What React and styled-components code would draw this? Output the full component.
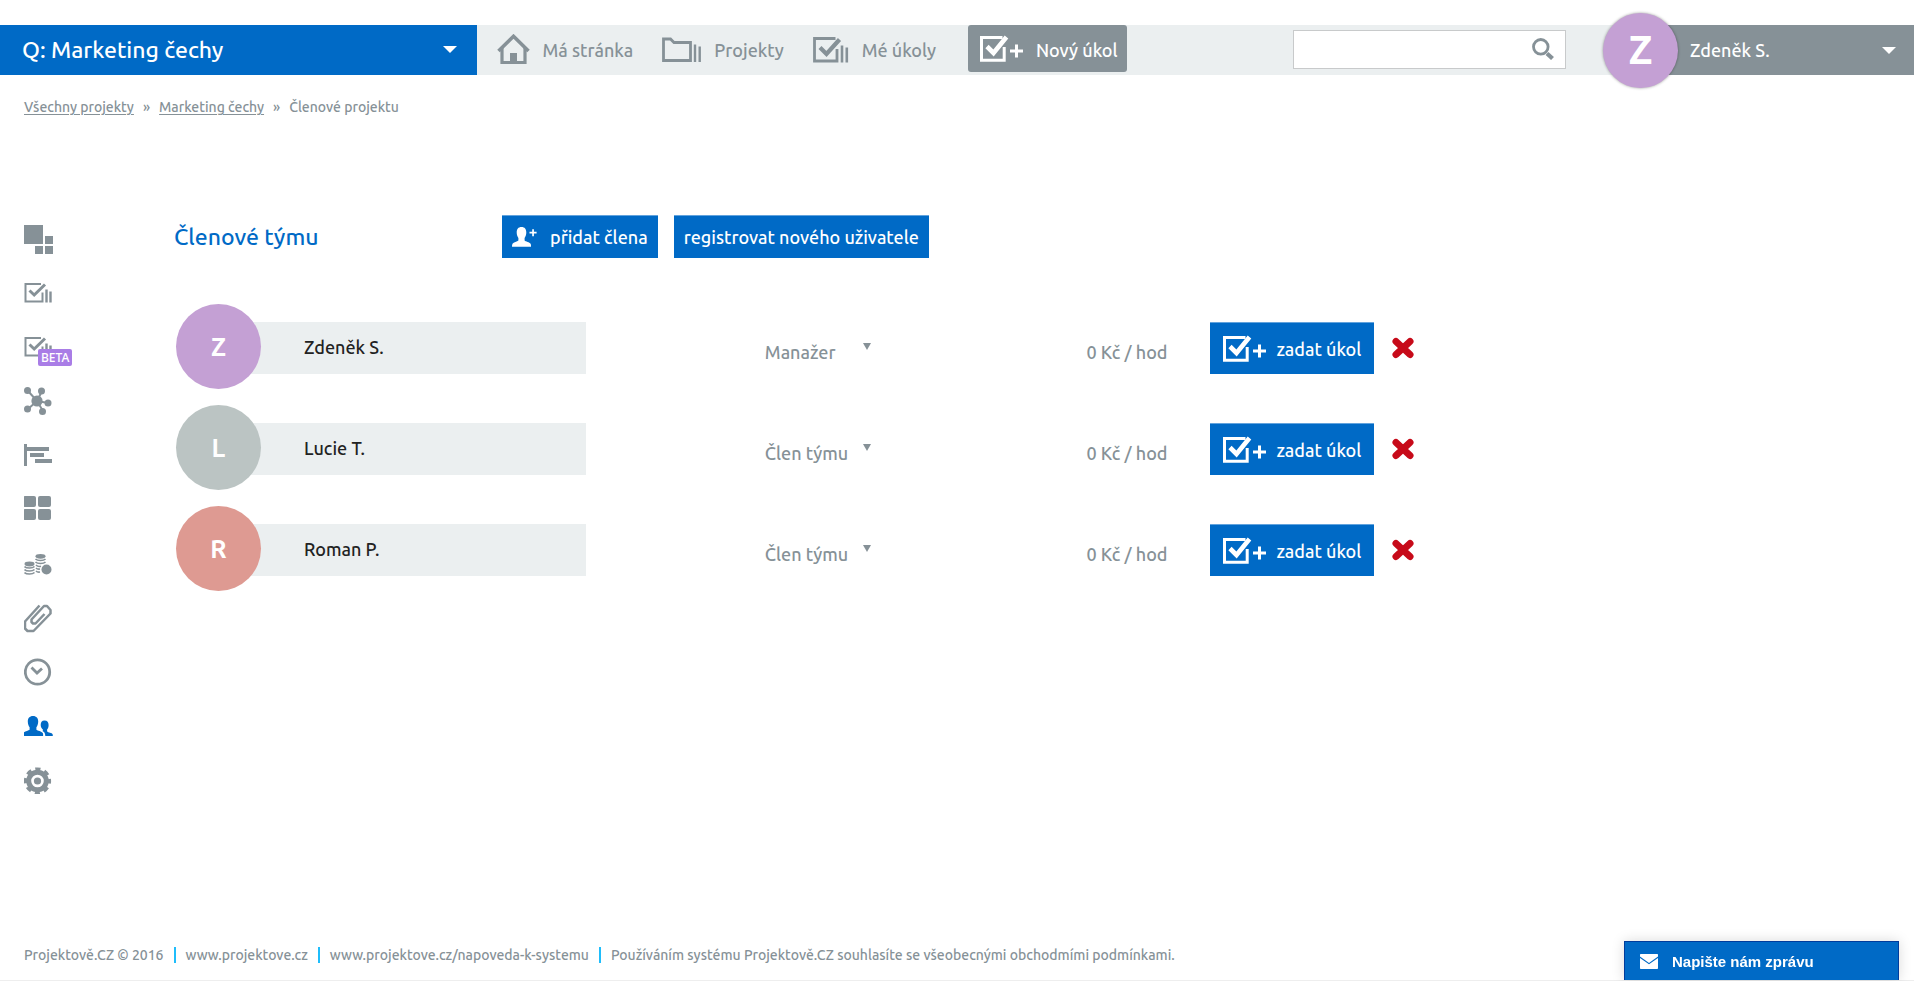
import React, { useState } from 'react'
import styled, { createGlobalStyle, ThemeProvider } from 'styled-components'

const theme = {
    blue: '#006ac6',
    grey: '#869197',
    light: '#ebeff0',
    text: '#222222',
    red: '#c70a19',
    beta: '#a97de6',
    line: '#eeeeee',
    cyan: '#1fbdfb',
}

const GlobalStyle = createGlobalStyle`
*, *::before, *::after {
  box-sizing: border-box;
}
body {
  margin: 0;
  background: #fff;
  font-family: Ubuntu, "Noto Sans", sans-serif;
  font-size: 18px;
  font-weight: 500;
}
button, input, select {
  font: inherit;
  color: inherit;
}
svg {
  display: block;
  flex: none;
}
`

const Page = styled.div`
display: flex;
flex-direction: column;
min-height: 100vh;
padding-top: 25px;
color: ${props => props.theme.grey};
border-bottom: 1px solid ${props => props.theme.line};
`

// Top bar
const TopBar = styled.header`
display: flex;
align-items: stretch;
height: 50px;
background: ${props => props.theme.light};
`

const ProjectButton = styled.button`
display: flex;
align-items: center;
justify-content: space-between;
width: calc(25% - 2px);
padding: 0 20px 2px 22px;
border: 0;
background: ${props => props.theme.blue};
color: #fff;
font-size: 23px;
cursor: pointer;
`

const MainNav = styled.nav`
display: flex;
align-items: center;
gap: 29px;
padding-left: 20px;
`

const NavLink = styled.a`
display: flex;
align-items: center;
gap: 13px;
color: inherit;
text-decoration: none;
white-space: nowrap;
`

const NewTask = styled.button`
display: flex;
align-items: center;
gap: 13px;
align-self: flex-start;
height: 47px;
padding: 2px 9px 0 12px;
margin-left: 3px;
border: 0;
border-radius: 3px;
background: ${props => props.theme.grey};
color: #fff;
white-space: nowrap;
cursor: pointer;
`

const Search = styled.form`
display: flex;
align-items: center;
align-self: center;
width: 273px;
height: 39px;
margin: 0 74px 2px auto;
border: 1px solid #c8cacb;
background: #fff;
`

const SearchInput = styled.input`
flex: 1;
min-width: 0;
height: 100%;
padding: 0 10px;
border: 0;
outline: 0;
background: transparent;
`

const SearchButton = styled.button`
padding: 0 11px;
border: 0;
background: transparent;
cursor: pointer;
`

const UserButton = styled.button`
display: flex;
align-items: center;
gap: 12px;
width: 274px;
padding: 0 18px 0 0;
border: 0;
background: ${props => props.theme.grey};
color: #fff;
cursor: pointer;
`

const UserName = styled.span`
flex: 1;
text-align: left;
`

const Avatar = styled.span`
display: flex;
align-items: center;
justify-content: center;
flex: none;
width: ${props => props.$size}px;
height: ${props => props.$size}px;
border-radius: 50%;
background: ${props => props.$color};
color: #fff;
font-size: 25px;
font-weight: 700;
`

const UserAvatar = styled(Avatar)`
margin-left: -37px;
padding-bottom: 2px;
font-size: 40px;
box-shadow: 0 0 3px rgba(0,0,0,0.4);
`

// Breadcrumbs
const Crumbs = styled.nav`
display: flex;
gap: 9px;
padding: 0 24px;
margin-top: 22px;
font-size: 14px;
line-height: 20px;

a {
  color: inherit;
  text-underline-offset: 2px;
}
`

const Body = styled.div`
display: flex;
flex: 1;
margin-top: 96px;
`

const SideNav = styled.nav`
display: flex;
flex-direction: column;
width: 174px;
padding-left: 24px;
`

const SideLink = styled.a`
position: relative;
display: flex;
align-items: center;
width: 32px;
height: 54px;
color: ${props => props.$active ? props.theme.blue : props.theme.grey};
`

const Beta = styled.span`
position: absolute;
top: 28px;
left: 14px;
padding: 0 3px;
border-radius: 2px;
background: ${props => props.theme.beta};
color: #fff;
font-family: "Noto Sans", sans-serif;
font-size: 12px;
font-weight: 500;
line-height: 17px;
`

const Content = styled.main`
flex: 1;
min-width: 0;
padding-right: 24px;
`

const Heading = styled.div`
display: flex;
align-items: center;
height: 46px;
`

const Title = styled.h1`
width: 328px;
margin: 0;
color: ${props => props.theme.blue};
font-size: 23px;
font-weight: 500;
`

const BlueButton = styled.button`
display: flex;
align-items: center;
gap: 13px;
height: 43px;
padding: 0 10px;
margin-right: 16px;
border: 0;
border-top: 1px solid #62a3dd;
background: ${props => props.theme.blue};
color: #fff;
white-space: nowrap;
cursor: pointer;
`

const TaskButton = styled(BlueButton)`
gap: 10px;
height: 52px;
padding: 2px 13px 0;
margin-right: 18px;
`

// Members
const Members = styled.table`
width: 100%;
margin-top: 37px;
border-collapse: collapse;
table-layout: fixed;

td {
  height: 101px;
  padding: 0;
  vertical-align: middle;
}
`

const Col = styled.col`
width: ${props => props.$width};
`

const Member = styled.div`
display: flex;
align-items: center;
padding-left: 2px;
`

const MemberName = styled.div`
flex: 1;
height: 52px;
margin-top: 2px;
margin-left: -44px;
padding-left: 87px;
background: ${props => props.theme.light};
color: ${props => props.theme.text};
line-height: 50px;
`

const MemberAvatar = styled(Avatar)`
z-index: 1;
`

const Role = styled.label`
display: flex;
align-items: center;
padding-left: 179px;
`

const RoleSelect = styled.select`
width: 98px;
margin-top: 10px;
padding: 0;
border: 0;
background: transparent;
appearance: none;
cursor: pointer;
`

const Rate = styled.span`
display: block;
margin-top: 10px;
padding-left: 3px;
white-space: nowrap;
`

const Actions = styled.div`
display: flex;
align-items: center;
margin-top: 2px;
padding-left: 4px;
`

const RemoveButton = styled.button`
padding: 0;
border: 0;
background: transparent;
color: ${props => props.theme.red};
cursor: pointer;
`

// Footer
const Footer = styled.footer`
display: flex;
padding: 0 24px;
margin-bottom: 15px;
font-size: 14px;
line-height: 20px;

a {
  color: inherit;
  text-decoration: none;
}
`

const Divider = styled.span`
width: 2px;
height: 16px;
margin: 2px 10px;
background: ${props => props.theme.cyan};
`

const Chat = styled.button`
position: fixed;
right: 15px;
bottom: 1px;
display: flex;
align-items: center;
gap: 14px;
width: 275px;
height: 39px;
padding: 0 15px;
border: 1px solid #003c9c;
border-bottom: 0;
background: ${props => props.theme.blue};
box-shadow: 0 0 12px rgba(0,0,0,0.15);
color: #fff;
font-family: "Liberation Sans", Arial, sans-serif;
font-size: 15px;
font-weight: 700;
cursor: pointer;
`

// Icons
const Caret = ({ width = 14, height = 7 }) => (
    <svg width={width} height={height} viewBox="0 0 14 7" preserveAspectRatio="none" fill="currentColor">
        <path d="M0 0h14L7 7z" />
    </svg>
)

const HomeIcon = () => (
    <svg width="33" height="32" viewBox="0 0 33 32" fill="none" stroke="currentColor">
        <path d="M1.500 17L16.500 2.300L31.500 17" strokeWidth="3.600" />
        <path d="M5 14V28.500H28V14" strokeWidth="3.200" />
        <path d="M13 19h7v9h-7z" fill="currentColor" stroke="none" />
    </svg>
)

const FolderIcon = () => (
    <svg width="39" height="26" viewBox="0 0 39 26" fill="none" stroke="currentColor" strokeWidth="2.800">
        <path d="M1.500 2H8.500L12 5.500H28.500V23.500H1.500z" />
        <path d="M33 7.500V25M37.700 9.500V25" strokeWidth="2.400" />
    </svg>
)

const TasksIcon = () => (
    <svg width="36" height="26" viewBox="0 0 36 26" fill="none" stroke="currentColor">
        <path d="M22.500 1.500H1.500V24H24V12" strokeWidth="2.800" />
        <path d="M7 10.500L13.500 17L26.500 2.500" strokeWidth="4.200" />
        <path d="M29 8.500V25.500M33.800 10.500V25.500" strokeWidth="2.600" />
    </svg>
)

const TaskPlusIcon = () => (
    <svg width="43" height="29" viewBox="0 0 43 29" fill="none" stroke="currentColor">
        <path d="M22.500 2.500H1.500V25.200H24.200V12" strokeWidth="3" />
        <path d="M7 11.500L13.500 18L26.500 2" strokeWidth="4.600" />
        <path d="M30 16H43M36.500 9.500V22.500" strokeWidth="3" />
    </svg>
)

const SearchIcon = () => (
    <svg width="22" height="22" viewBox="0 0 22 22" fill="none" stroke="currentColor">
        <circle cx="8.800" cy="8.800" r="7.300" strokeWidth="2.800" />
        <path d="M15 15.500L20.500 20.500" strokeWidth="4.200" />
    </svg>
)

const DashboardIcon = () => (
    <svg width="31" height="31" viewBox="0 0 31 31" fill="currentColor">
        <path d="M0 0h19v19H0zM21 11h8v8h-8zM11 21h8v8h-8zM21 21h8v8h-8z" />
    </svg>
)

const MindMapIcon = () => (
    <svg width="31" height="30" viewBox="0 0 31 30" fill="currentColor" stroke="currentColor" strokeWidth="2">
        <path d="M4 4L13 14L18 4M4 22L13 14L19 24M13 14L24 16" fill="none" />
        <g stroke="none">
            <circle cx="13" cy="14" r="5.600" />
            <circle cx="3.500" cy="3.500" r="3.500" />
            <circle cx="17.500" cy="4" r="3.500" />
            <circle cx="24" cy="16" r="3.500" />
            <circle cx="3.500" cy="22" r="3.500" />
            <circle cx="18.500" cy="24.500" r="3.500" />
        </g>
    </svg>
)

const GanttIcon = () => (
    <svg width="31" height="26" viewBox="0 0 31 26" fill="currentColor">
        <path d="M0 1h3v22H0zM3 4H25v4H3zM6 10h14v4H6zM11 16h17v4H11z" />
    </svg>
)

const BoardIcon = () => (
    <svg width="29" height="28" viewBox="0 0 29 28" fill="currentColor">
        <rect x="-1" y="0" width="13" height="11" rx="2" />
        <rect x="14" y="0" width="13" height="11" rx="2" />
        <rect x="-1" y="13" width="13" height="11" rx="2" />
        <rect x="14" y="13" width="13" height="11" rx="2" />
    </svg>
)

const CoinsIcon = () => (
    <svg width="31" height="22" viewBox="0 0 31 22" fill="none" stroke="currentColor" strokeWidth="1.600">
        <ellipse cx="5.500" cy="11" rx="5" ry="2.400" fill="currentColor" stroke="none" />
        <path d="M0.500 13.500c2 2 8 2 10 0M0.500 16.500c2 2 8 2 10 0M0.500 19.500c2 2 8 2 10 0" />
        <ellipse cx="16.500" cy="3.300" rx="5" ry="2.400" fill="currentColor" stroke="none" />
        <path d="M11.500 6c2 2 8 2 10 0M11.500 9c2 2 8 2 10 0M12 12c1.500 1.500 4 1.500 5 1.200M12 15c1 1 2.500 1.300 4 1M12 18c1 1 2.500 1.300 4 1" />
        <circle cx="22.500" cy="16.500" r="5" fill="currentColor" stroke="none" />
    </svg>
)

const ClipIcon = () => (
    <svg width="31" height="29" viewBox="1 0 31 29" fill="none" stroke="currentColor" strokeWidth="2.500" strokeLinejoin="round">
        <path d="M16.500 1.500L2 17.500V24.500L4.500 27H10.500L27.500 9.500V6L24 2H21L8.500 15.500V18L10 19.500H12.500L21.500 10" />
    </svg>
)

const ClockIcon = () => (
    <svg width="30" height="28" viewBox="1 0 30 28" fill="none" stroke="currentColor">
        <circle cx="14.500" cy="14" r="12.200" strokeWidth="2.800" />
        <path d="M8.500 9.500L14 15L19 10.500" strokeWidth="2.800" />
    </svg>
)

const UsersIcon = () => (
    <svg width="31" height="20" viewBox="1 0 31 20" fill="currentColor">
        <path d="M10 0c3.500 0 5.200 2.300 5.200 5.500 0 2.500-.8 4.500-1.800 5.800v2.400c1 1 5.400 1.500 6.400 3.300.4.900.3 1.700.3 3H0c0-1.300 0-2.100.4-3 1-1.800 5-2.300 6.200-3.300v-2.400C5.600 10 4.800 8 4.800 5.500 4.800 2.300 6.500 0 10 0z" />
        <path d="M21.500 4.500c2.900 0 4.100 2 4.100 4.500 0 2-.6 3.600-1.500 4.600v2c1 1 5 1.200 5.500 2.600.2.600.2 1 .2 1.800h-7.500c0-3.500-1.500-4.200-2.600-4.800l.2-1.600c-1.100-1-2.200-2.600-2.200-4.600 0-2.500 1-4.500 3.800-4.500z" />
    </svg>
)

const GearIcon = () => (
    <svg width="30" height="28" viewBox="1 -1 30 28" fill="none" stroke="currentColor">
        <circle cx="14.500" cy="14" r="8.800" strokeWidth="5" />
        <circle cx="14.500" cy="14" r="12" strokeWidth="3.200" strokeDasharray="5.200 4.225" strokeDashoffset="2.600" />
        <circle cx="14.500" cy="14" r="3.600" fill="currentColor" stroke="none" />
    </svg>
)

const UserPlusIcon = () => (
    <svg width="25" height="20" viewBox="0 0 25 20" fill="currentColor">
        <path d="M9.500 0c3.300 0 4.800 2.200 4.800 5.300 0 2.500-.7 4.400-1.700 5.700v2.500c1 1.200 5 1.600 6 3.300.5.900.4 1.800.4 2.900H0c0-1.100 0-2 .5-2.900 1-1.700 4.800-2.100 5.900-3.300V11C5.400 9.700 4.700 7.800 4.700 5.300 4.700 2.200 6.200 0 9.500 0z" />
        <path d="M17.500 4.800h2.700V2.200h1.700v2.600h2.700v1.800h-2.700v2.600h-1.700V6.600h-2.700z" />
    </svg>
)

const CrossIcon = () => (
    <svg width="22" height="22" viewBox="0 0 22 22" fill="none" stroke="currentColor" strokeWidth="7" strokeLinecap="round">
        <path d="M4 4.500L18 17.500M18 4.500L4 17.500" />
    </svg>
)

const MailIcon = () => (
    <svg width="18" height="15" viewBox="0 0 18 15" fill="#fff">
        <path d="M1 0h16c.6 0 1 .4 1 1v1.500L9 9 0 2.500V1c0-.6.4-1 1-1z" />
        <path d="M0 4l9 6.300L18 4V14c0 .6-.4 1-1 1H1c-.6 0-1-.4-1-1z" />
    </svg>
)

const SideTasksIcon = () => (
    <svg width="30" height="23" viewBox="0 0 30 23" fill="none" stroke="currentColor">
        <path d="M17 1H1.500V18.500H18.500V9.500" strokeWidth="2" />
        <path d="M5.500 7.500L10.200 12L21 1.500" strokeWidth="3" />
        <path d="M22.500 6.500V19.500M26.500 8.500V19.500" strokeWidth="2.400" />
    </svg>
)

const sideItems = [
    { label: 'Přehled', icon: <DashboardIcon /> },
    { label: 'Úkoly', icon: <SideTasksIcon /> },
    { label: 'Úkoly beta', icon: <SideTasksIcon />, beta: true },
    { label: 'Myšlenková mapa', icon: <MindMapIcon /> },
    { label: 'Ganttův diagram', icon: <GanttIcon /> },
    { label: 'Nástěnka', icon: <BoardIcon /> },
    { label: 'Finance', icon: <CoinsIcon /> },
    { label: 'Soubory', icon: <ClipIcon /> },
    { label: 'Čas', icon: <ClockIcon /> },
    { label: 'Členové', icon: <UsersIcon />, active: true },
    { label: 'Nastavení', icon: <GearIcon /> },
]

const members = [
    { name: 'Zdeněk S.', initial: 'Z', color: '#c4a0d4', role: 'Manažer' },
    { name: 'Lucie T.', initial: 'L', color: '#bbc4c3', role: 'Člen týmu' },
    { name: 'Roman P.', initial: 'R', color: '#de9a92', role: 'Člen týmu' },
]

const MemberRow = ({ member }) => {
    const [role, setRole] = useState(member.role)

    return (
        <tr>
            <td>
                <Member>
                    <MemberAvatar $size={85} $color={member.color}>{member.initial}</MemberAvatar>
                    <MemberName>{member.name}</MemberName>
                </Member>
            </td>
            <td>
                <Role>
                    <RoleSelect aria-label={`Role: ${member.name}`} value={role} onChange={e => setRole(e.target.value)}>
                        <option>Manažer</option>
                        <option>Člen týmu</option>
                    </RoleSelect>
                    <Caret width={8} height={7} />
                </Role>
            </td>
            <td><Rate>0 Kč / hod</Rate></td>
            <td>
                <Actions>
                    <TaskButton type="button"><TaskPlusIcon />zadat úkol</TaskButton>
                    <RemoveButton type="button" aria-label="Odebrat"><CrossIcon /></RemoveButton>
                </Actions>
            </td>
        </tr>
    )
}

const App = () => {
    const [query, setQuery] = useState('')

    return (
        <ThemeProvider theme={theme}>
            <GlobalStyle />
            <Page>
                <TopBar>
                    <ProjectButton type="button">Q: Marketing čechy<Caret /></ProjectButton>
                    <MainNav>
                        <NavLink href="#"><HomeIcon />Má stránka</NavLink>
                        <NavLink href="#"><FolderIcon />Projekty</NavLink>
                        <NavLink href="#"><TasksIcon />Mé úkoly</NavLink>
                        <NewTask type="button"><TaskPlusIcon />Nový úkol</NewTask>
                    </MainNav>
                    <Search onSubmit={e => e.preventDefault()}>
                        <SearchInput aria-label="Hledat" value={query} onChange={e => setQuery(e.target.value)} />
                        <SearchButton type="submit" aria-label="Hledat"><SearchIcon /></SearchButton>
                    </Search>
                    <UserButton type="button">
                        <UserAvatar $size={75} $color="#c4a0d4">Z</UserAvatar>
                        <UserName>Zdeněk S.</UserName>
                        <Caret />
                    </UserButton>
                </TopBar>

                <Crumbs>
                    <a href="#">Všechny projekty</a>
                    <span>»</span>
                    <a href="#">Marketing čechy</a>
                    <span>»</span>
                    <span>Členové projektu</span>
                </Crumbs>

                <Body>
                    <SideNav>
                        {sideItems.map(item => (
                            <SideLink key={item.label} href="#" aria-label={item.label} $active={item.active}>
                                {item.icon}
                                {item.beta && <Beta>BETA</Beta>}
                            </SideLink>
                        ))}
                    </SideNav>

                    <Content>
                        <Heading>
                            <Title>Členové týmu</Title>
                            <BlueButton type="button"><UserPlusIcon />přidat člena</BlueButton>
                            <BlueButton type="button">registrovat nového uživatele</BlueButton>
                        </Heading>
                        <Members>
                            <colgroup>
                                <Col $width="24%" />
                                <Col $width="29%" />
                                <Col $width="123px" />
                                <Col />
                            </colgroup>
                            <tbody>
                                {members.map(member => <MemberRow key={member.name} member={member} />)}
                            </tbody>
                        </Members>
                    </Content>
                </Body>

                <Footer>
                    <span>Projektově.CZ © 2016</span>
                    <Divider />
                    <a href="#">www.projektove.cz</a>
                    <Divider />
                    <a href="#">www.projektove.cz/napoveda-k-systemu</a>
                    <Divider />
                    <span>Používáním systému Projektově.CZ souhlasíte se všeobecnými obchodmími podmínkami.</span>
                </Footer>
            </Page>
            <Chat type="button"><MailIcon />Napište nám zprávu</Chat>
        </ThemeProvider>
    )
}

export default App
